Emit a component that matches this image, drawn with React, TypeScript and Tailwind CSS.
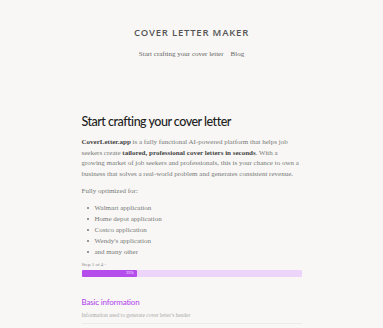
import React from "react";

const items = ["Walmart application", "Home depot application", "Costco application", "Wendy's application", "and many other"];

export default function App() {
  return (
    <div className="min-h-[328px] w-full bg-[#f8f7f5] font-['Liberation_Serif','DejaVu_Serif',serif]">
      <header className="flex flex-col items-center pt-[27px]">
        <h1 className="font-['Open_Sans',sans-serif] text-[9.5px] font-semibold leading-[12px] tracking-[0.8px] text-[#555]">
          COVER LETTER MAKER
        </h1>
        <nav className="mt-[11px] flex gap-[7px] text-[7px] leading-[9px] text-[#666]">
          <span>Start crafting your cover letter</span>
          <span>Blog</span>
        </nav>
      </header>
      <main className="mx-auto mt-[55px] w-[220px]">
        <h2 className="font-['Lato',sans-serif] text-[12.5px] font-medium leading-[15px] tracking-[-0.5px] text-[#222]">
          Start crafting your cover letter
        </h2>
        <p className="mt-[8px] text-[7px] leading-[10.7px] text-[#777]">
          <b className="text-[#444]">CoverLetter.app</b> is a fully functional AI-powered platform that helps job
          seekers create <b className="text-[#444]">tailored, professional cover letters in seconds</b>. With a
          growing market of job seekers and professionals, this is your chance to own a business that solves a
          real-world problem and generates consistent revenue.
        </p>
        <p className="mt-[6px] text-[7px] leading-[10.7px] text-[#777]">Fully optimized for:</p>
        <ul className="mt-[6px] flex flex-col text-[7px] leading-[11px] text-[#777]">
          {items.map((t) => (
            <li key={t} className="flex items-center gap-[6px] pl-[5px]">
              <span className="h-[2px] w-[2px] rounded-full bg-[#777]" />
              <span>{t}</span>
            </li>
          ))}
        </ul>
        <div className="mt-[4px] text-[5px] leading-[6px] text-[#888]">Step 1 of 4 -</div>
        <div className="mt-[2px] h-[7px] w-full rounded-[1px] bg-[#edd4fb]">
          <div className="flex h-full w-1/4 items-center justify-end rounded-[1px] bg-[#b54cec] pr-[3px] text-[4px] text-white">
            25%
          </div>
        </div>
        <h3 className="mt-[20px] font-['Lato',sans-serif] text-[8px] font-medium leading-[10px] tracking-[-0.2px] text-[#b54cec]">
          Basic information
        </h3>
        <p className="mt-[5px] text-[5.5px] leading-[7px] text-[#aaa]">Information used to generate cover letter's header</p>
        <div className="mt-[4px] h-px w-full bg-[#ecebe8]" />
      </main>
    </div>
  );
}
